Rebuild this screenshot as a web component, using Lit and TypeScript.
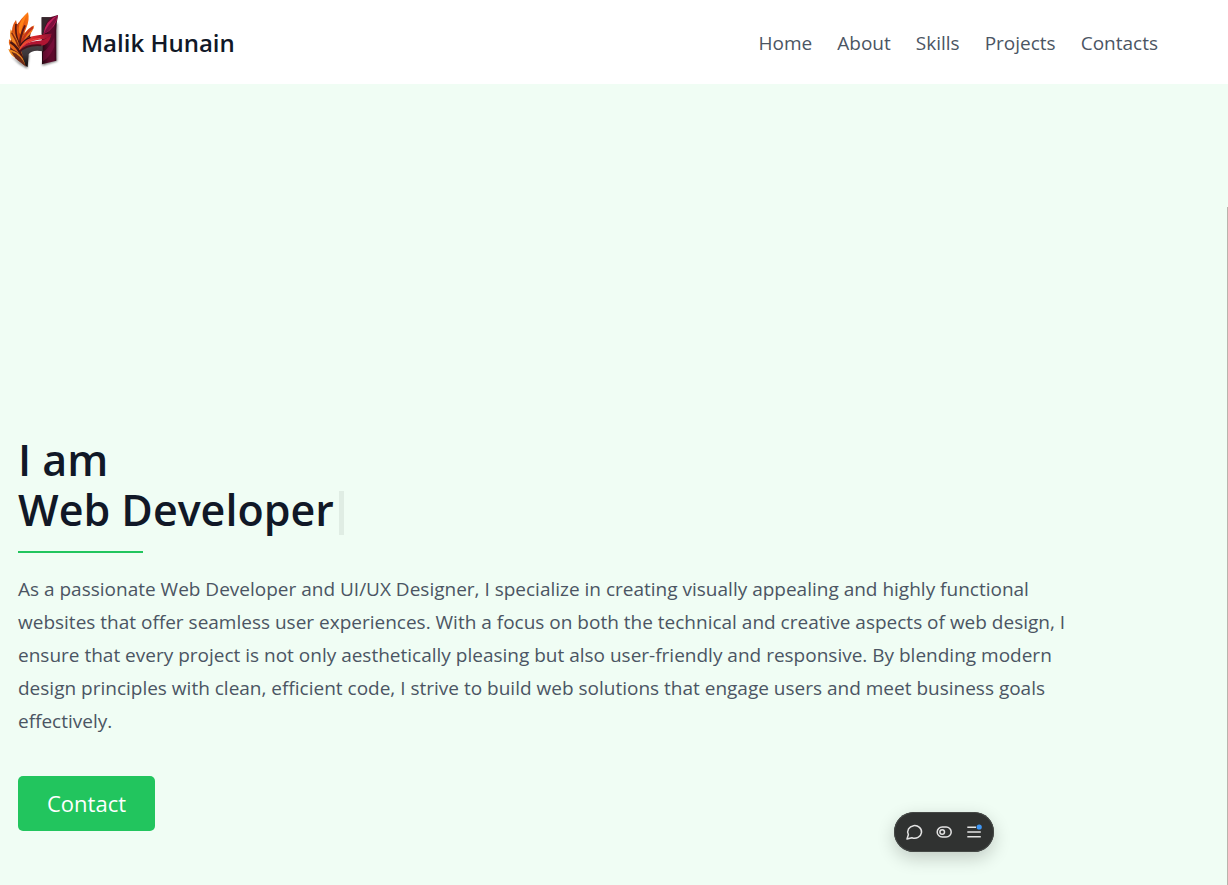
import { LitElement, html, css, svg } from "lit";
import { customElement } from "lit/decorators.js";

const logo = svg`
  <defs>
    <linearGradient id="flame" x1="0" y1="1" x2="1" y2="0">
      <stop offset="0" stop-color="#b83212" /><stop offset=".5" stop-color="#e0500f" /><stop offset="1" stop-color="#ff7a10" />
    </linearGradient>
    <linearGradient id="stem" x1="0" y1="0" x2="1" y2="0">
      <stop offset="0" stop-color="#22060f" /><stop offset=".45" stop-color="#5c0a2a" /><stop offset=".75" stop-color="#5c0a2c" /><stop offset="1" stop-color="#1c050d" />
    </linearGradient>
    <linearGradient id="bar" x1="0" y1="0" x2="1" y2="0">
      <stop offset="0" stop-color="#f2542a" /><stop offset=".5" stop-color="#d2242c" /><stop offset="1" stop-color="#8c0f38" />
    </linearGradient>
    <linearGradient id="coal" x1="0" y1="0" x2="0" y2="1">
      <stop offset="0" stop-color="#4b4548" /><stop offset=".5" stop-color="#3a3437" /><stop offset="1" stop-color="#0c090a" />
    </linearGradient>
    <filter id="soft" x="-20%" y="-20%" width="140%" height="140%"><feGaussianBlur stdDeviation="3" /></filter>
  </defs>
  <path d="M34 168 L60 192 L84 206 L90 164 L82 160 L78 196Z M130 197 L174 184 L175 70 L170 70 L168 178 L128 188Z" fill="#000" opacity=".5" filter="url(#soft)" />
  <path d="M127 52 L152 52 L176 45 Q171 70 171 92 L171 182 L128 193Z" fill="url(#stem)" />
  <path d="M127 52 L155 52 Q138 66 132 101 L127 102Z" fill="#35272c" />
  <path d="M176 45 Q172 84 132 103 Q137 62 176 45Z" fill="#c4205c" />
  <path d="M176 45 Q147 70 132 103 Q164 88 176 45Z" fill="#7e103e" />
  <path d="M131 156 Q150 145 165 112 L165 140 Q151 172 131 184Z" fill="#8c1044" opacity=".5" />
  <path d="M56 150 Q84 126 130 132 L130 154 Q98 148 88 163 L85 201 L70 192 Q52 175 56 150Z" fill="url(#coal)" />
  <path d="M38 92 L60 66 L78 104 L98 84 L90 118 L64 150 L66 184 L32 150Z" fill="#5a1a14" />
  <path d="M86 37 Q92 60 80 86 Q70 108 62 134 Q48 105 54 76 Q64 56 86 37Z" fill="url(#flame)" />
  <path d="M86 37 Q70 68 64 104 Q54 96 60 74 Q68 54 86 37Z" fill="#ff8216" />
  <path d="M50 60 Q38 76 38 92 Q44 108 56 130 Q62 100 50 60Z" fill="#e05513" />
  <path d="M50 72 Q47 99 57 126" fill="none" stroke="#54150f" stroke-width="5" />
  <path d="M34 88 Q29 112 38 125 Q50 135 62 150 Q60 120 34 88Z" fill="#f08420" />
  <path d="M37 98 Q50 118 61 148" fill="none" stroke="#8f2a12" stroke-width="5" />
  <path d="M105 76 Q100 97 88 107 Q76 117 63 134 Q65 96 105 76Z" fill="#f27a1c" />
  <path d="M101 81 Q76 101 64 132" fill="none" stroke="#c5331a" stroke-width="7" />
  <path d="M77 76 Q63 105 61 134" fill="none" stroke="#5f1814" stroke-width="6" />
  <path d="M29 118 Q26 140 42 149 Q60 156 70 177 Q72 145 29 118Z" fill="#e8681a" />
  <path d="M33 126 Q58 142 69 174" fill="none" stroke="#4a1512" stroke-width="7" />
  <path d="M27 147 Q34 169 50 174 Q65 183 78 197 Q70 156 27 147Z" fill="#ee8a20" />
  <path d="M36 155 Q64 162 82 201 Q60 186 48 175" fill="#6e2a16" />
  <path d="M60 151 Q63 126 86 112 Q111 104 158 101 Q150 118 118 119 Q83 124 60 151Z" fill="url(#bar)" />
  <path d="M60 152 Q79 124 112 123 Q137 122 156 105 Q147 140 121 137 Q84 128 60 152Z" fill="#b01532" />
  <path d="M66 140 Q84 119 124 115" fill="none" stroke="#f04a40" stroke-width="3" />
  <path d="M60 156 Q82 132 126 136" fill="none" stroke="#4a0f1a" stroke-width="5" />
  <path d="M62 138 Q74 118 94 112" fill="none" stroke="#3d1015" stroke-width="4" />`;

@customElement("app-root")
export class AppRoot extends LitElement {
  static styles = css`
    :host {
      display: flex;
      flex-direction: column;
      position: relative;
      min-height: 100vh;
      background: #f0fdf4;
      color: #4b5563;
      font-family: "Segoe UI", "Open Sans", sans-serif;
      font-size: 19px;
    }
    * { box-sizing: border-box; }
    header {
      display: flex;
      align-items: center;
      justify-content: space-between;
      padding: 10px 70px 14px 5px;
      background: #fff;
    }
    .brand {
      display: flex;
      align-items: center;
      gap: 16px;
      color: #111827;
      font-size: 24px;
      font-weight: 600;
      line-height: 32px;
      text-decoration: none;
    }
    .brand svg { width: 60px; height: 60px; }
    nav { display: flex; gap: 25px; padding-top: 6px; }
    .brand span { padding-top: 6px; }
    nav a { color: inherit; line-height: 30px; text-decoration: none; }
    main {
      flex: 1;
      display: flex;
      flex-direction: column;
      align-items: flex-start;
      justify-content: flex-end;
      padding: 40px 150px 54px 18px;
    }
    h1 {
      margin: 0;
      color: #111827;
      font-size: 43px;
      font-weight: 600;
      line-height: 50px;
    }
    .typed { display: flex; align-items: flex-end; gap: 5px; }
    .cursor { width: 5px; height: 44px; background: #e0ede4; }
    .rule { width: 125px; height: 2px; margin: 16px 0 20px; border: 0; background: #22c55e; }
    p { margin: 0 0 38px; max-width: 1050px; line-height: 33px; }
    .contact {
      padding: 0 29px;
      border: 0;
      border-radius: 5px;
      background: #22c55e;
      color: #fff;
      font-family: inherit;
      font-size: 22px;
      line-height: 55px;
    }
    .toolbar {
      position: absolute;
      right: 234px;
      bottom: 33px;
      display: flex;
      align-items: center;
      gap: 10px;
      padding: 10px;
      border-radius: 20px;
      background: #303231;
      box-shadow: inset 0 0 0 1px #454846, 0 6px 18px rgba(0, 0, 0, 0.2);
    }
    .toolbar button { display: block; padding: 0; border: 0; background: none; }
    .toolbar svg { display: block; width: 20px; height: 20px; fill: none; stroke: #e3e3e3; stroke-width: 1.5; }
    .scroll-edge { position: absolute; top: 207px; right: 0; bottom: 0; width: 1px; background: #b9b3ab; }
  `;

  private links = ["Home", "About", "Skills", "Projects", "Contacts"];

  render() {
    return html`
      <header>
        <a class="brand" href="#home">
          <svg viewBox="17 30 180 180" aria-hidden="true">${logo}</svg>
          <span>Malik Hunain</span>
        </a>
        <nav>${this.links.map((l) => html`<a href="#${l.toLowerCase()}">${l}</a>`)}</nav>
      </header>
      <main>
        <h1>I am<span class="typed">Web Developer<span class="cursor"></span></span></h1>
        <hr class="rule" />
        <p>
          As a passionate Web Developer and UI/UX Designer, I specialize in creating visually appealing and highly
          functional websites that offer seamless user experiences. With a focus on both the technical and creative
          aspects of web design, I ensure that every project is not only aesthetically pleasing but also user-friendly
          and responsive. By blending modern design principles with clean, efficient code, I strive to build web
          solutions that engage users and meet business goals effectively.
        </p>
        <button class="contact" type="button">Contact</button>
      </main>
      <div class="toolbar">
        <button type="button" aria-label="Comment">
          <svg viewBox="0 0 20 20"><path d="M3 17 L4.4 12.6 A6.9 6.3 0 1 1 7.9 15.7 Z" stroke-linejoin="round" /></svg>
        </button>
        <button type="button" aria-label="Draft mode">
          <svg viewBox="0 0 20 20"><rect x="3.2" y="5" width="14" height="10" rx="5" /><circle cx="8.2" cy="10" r="2.3" /></svg>
        </button>
        <button type="button" aria-label="Menu">
          <svg viewBox="0 0 20 20">
            <path d="M3.3 5.2 H12 M3.3 10 H16.8 M3.3 14.8 H16.8" />
            <circle cx="15.2" cy="5" r="2.6" fill="#3f97f6" stroke="none" />
          </svg>
        </button>
      </div>
      <div class="scroll-edge"></div>
    `;
  }
}
